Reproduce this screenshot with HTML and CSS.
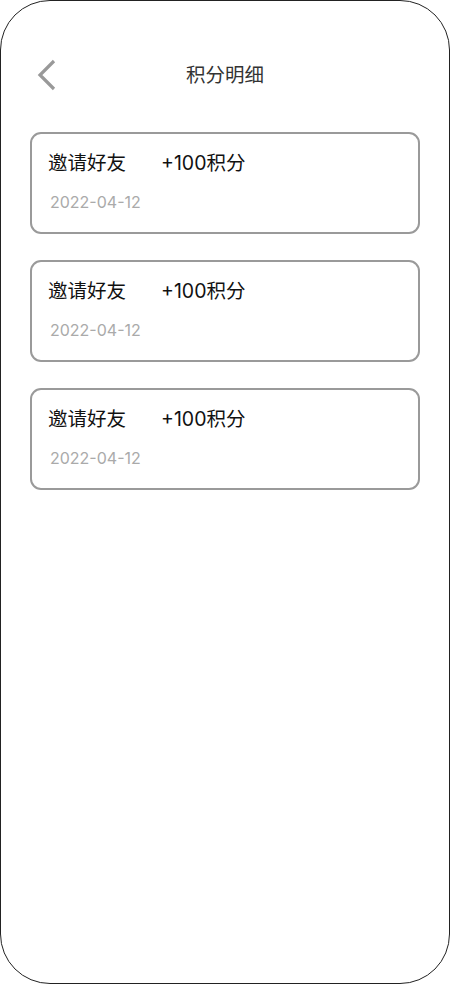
FILE: index.html
```html
<!DOCTYPE html>
<html lang="zh-CN">
<head>
<meta charset="utf-8">
<title>积分明细</title>
<link rel="stylesheet" href="styles.css">
</head>
<body>
<div class="phone">
  <header class="header">
    <svg class="back" width="20" height="32" viewBox="0 0 20 32">
      <polyline points="17,2 3,16 17,30" fill="none" stroke="#999" stroke-width="3.2"/>
    </svg>
    <h1 class="title">积分明细</h1>
  </header>
  <main class="list">
    <div class="card">
      <div class="row"><span class="name">邀请好友</span><span class="points">+100积分</span></div>
      <div class="date">2022-04-12</div>
    </div>
    <div class="card">
      <div class="row"><span class="name">邀请好友</span><span class="points">+100积分</span></div>
      <div class="date">2022-04-12</div>
    </div>
    <div class="card">
      <div class="row"><span class="name">邀请好友</span><span class="points">+100积分</span></div>
      <div class="date">2022-04-12</div>
    </div>
  </main>
</div>
</body>
</html>
```
FILE: styles.css
```css
* { box-sizing: border-box; }
html, body { margin: 0; padding: 0; background: #fff; }
body { font-family: Inter, "Noto Sans CJK SC", "Noto Sans", sans-serif; }
.phone {
  width: 450px;
  height: 984px;
  border: 1px solid #222;
  border-radius: 50px;
  background: #fff;
  overflow: hidden;
}
.header {
  position: relative;
  height: 131px;
  display: flex;
  justify-content: center;
  padding-top: 58px;
}
.back {
  position: absolute;
  left: 36px;
  top: 58px;
}
.title {
  margin: 0;
  font-family: "Noto Sans CJK SC", sans-serif;
  font-size: 19.5px;
  font-weight: 400;
  color: #333;
  line-height: 30px;
  height: 30px;
}
.list {
  padding: 0 29px 0 29px;
  display: flex;
  flex-direction: column;
  gap: 26px;
}
.card {
  height: 102px;
  border: 2px solid #9a9a9a;
  border-radius: 11px;
  padding: 14px 0 0 16px;
}
.row {
  display: flex;
  font-size: 19.5px;
  line-height: 30px;
  color: #111;
}
.name { width: 113px; }
.date {
  margin-top: 14px;
  padding-left: 2px;
  font-size: 16px;
  line-height: 20px;
  color: #aaa;
}
```
